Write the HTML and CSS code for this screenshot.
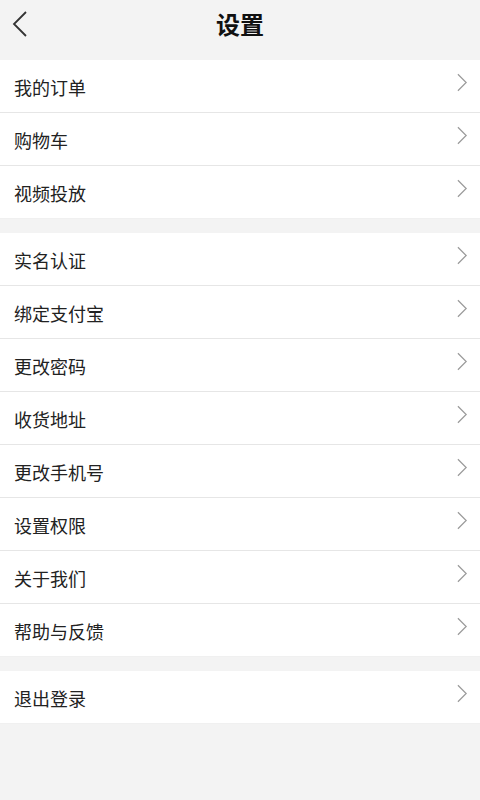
FILE: index.html
```html
<!DOCTYPE html>
<html lang="zh">
<head>
<meta charset="utf-8">
<link rel="stylesheet" href="styles.css">
</head>
<body>
<div class="header">
  <svg class="back" width="16" height="26" viewBox="0 0 16 26"><path d="M14 1 L2 13 L14 25" fill="none" stroke="#333" stroke-width="1.8"/></svg>
  <div class="title">设置</div>
</div>
<div class="group">
  <div class="row"><span>我的订单</span><svg class="arr" viewBox="0 0 12 20"><path d="M1 1 L10 10 L1 19" fill="none" stroke="#9a9a9a" stroke-width="1.3"/></svg></div>
  <div class="row"><span>购物车</span><svg class="arr" viewBox="0 0 12 20"><path d="M1 1 L10 10 L1 19" fill="none" stroke="#9a9a9a" stroke-width="1.3"/></svg></div>
  <div class="row"><span>视频投放</span><svg class="arr" viewBox="0 0 12 20"><path d="M1 1 L10 10 L1 19" fill="none" stroke="#9a9a9a" stroke-width="1.3"/></svg></div>
</div>
<div class="group">
  <div class="row"><span>实名认证</span><svg class="arr" viewBox="0 0 12 20"><path d="M1 1 L10 10 L1 19" fill="none" stroke="#9a9a9a" stroke-width="1.3"/></svg></div>
  <div class="row"><span>绑定支付宝</span><svg class="arr" viewBox="0 0 12 20"><path d="M1 1 L10 10 L1 19" fill="none" stroke="#9a9a9a" stroke-width="1.3"/></svg></div>
  <div class="row"><span>更改密码</span><svg class="arr" viewBox="0 0 12 20"><path d="M1 1 L10 10 L1 19" fill="none" stroke="#9a9a9a" stroke-width="1.3"/></svg></div>
  <div class="row"><span>收货地址</span><svg class="arr" viewBox="0 0 12 20"><path d="M1 1 L10 10 L1 19" fill="none" stroke="#9a9a9a" stroke-width="1.3"/></svg></div>
  <div class="row"><span>更改手机号</span><svg class="arr" viewBox="0 0 12 20"><path d="M1 1 L10 10 L1 19" fill="none" stroke="#9a9a9a" stroke-width="1.3"/></svg></div>
  <div class="row"><span>设置权限</span><svg class="arr" viewBox="0 0 12 20"><path d="M1 1 L10 10 L1 19" fill="none" stroke="#9a9a9a" stroke-width="1.3"/></svg></div>
  <div class="row"><span>关于我们</span><svg class="arr" viewBox="0 0 12 20"><path d="M1 1 L10 10 L1 19" fill="none" stroke="#9a9a9a" stroke-width="1.3"/></svg></div>
  <div class="row"><span>帮助与反馈</span><svg class="arr" viewBox="0 0 12 20"><path d="M1 1 L10 10 L1 19" fill="none" stroke="#9a9a9a" stroke-width="1.3"/></svg></div>
</div>
<div class="group">
  <div class="row"><span>退出登录</span><svg class="arr" viewBox="0 0 12 20"><path d="M1 1 L10 10 L1 19" fill="none" stroke="#9a9a9a" stroke-width="1.3"/></svg></div>
</div>
</body>
</html>
```
FILE: styles.css
```css
html, body {
  margin: 0;
  padding: 0;
  background: #f3f3f3;
  font-family: "Noto Sans CJK SC", "Noto Sans", sans-serif;
}
.header {
  height: 60px;
  position: relative;
  display: flex;
  align-items: center;
  justify-content: center;
}
.back {
  position: absolute;
  left: 12px;
  top: 11px;
}
.title {
  font-size: 24px;
  font-weight: bold;
  color: #111;
  margin-top: -14px;
}
.group {
  background: #fff;
  margin-bottom: 14px;
}
.row {
  height: 52px;
  border-bottom: 1px solid #e6e6e6;
  display: flex;
  align-items: center;
  justify-content: space-between;
  padding: 0 12px 0 14px;
}
.row:last-child {
  border-bottom-color: #f0f0f0;
}
.row span {
  font-size: 18px;
  color: #222;
  margin-top: 2px;
}
.arr {
  width: 11px;
  height: 19px;
  margin-top: -7px;
}
```
